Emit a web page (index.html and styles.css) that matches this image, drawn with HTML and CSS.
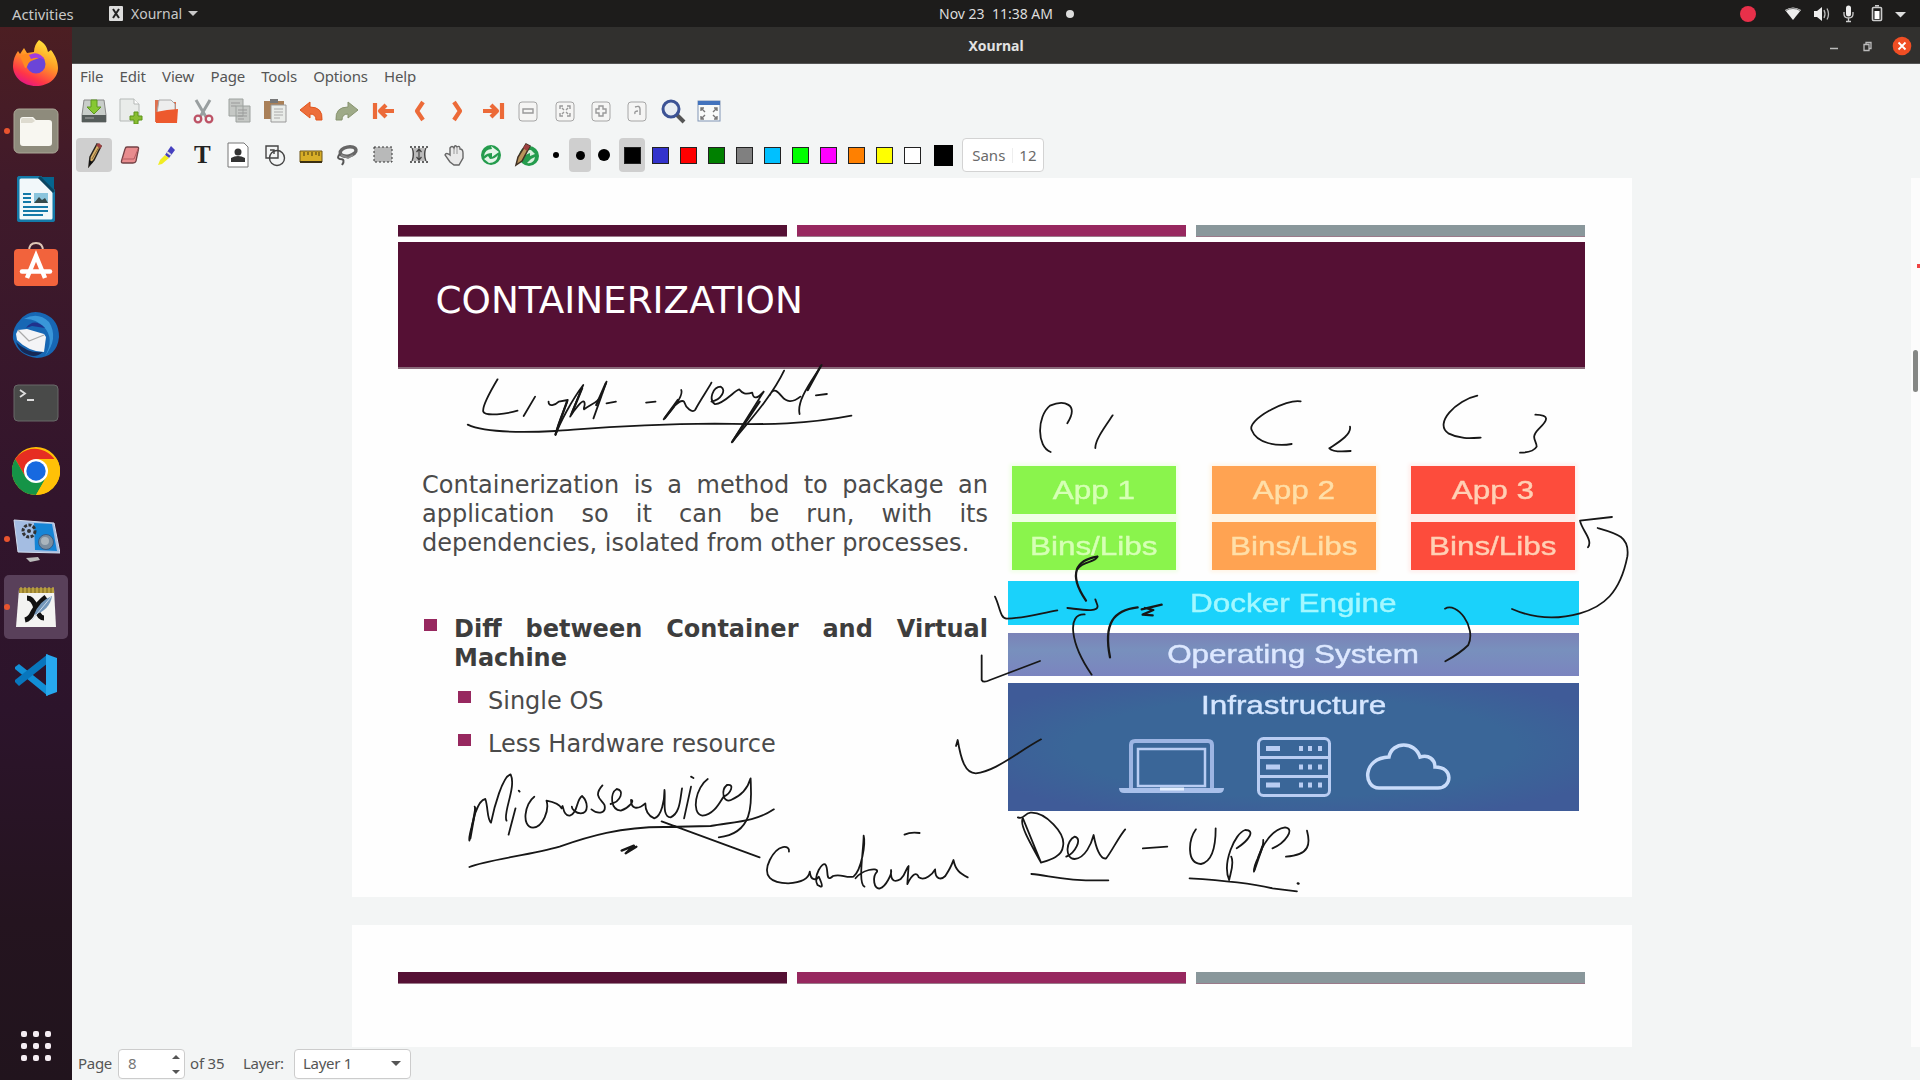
FILE: index.html
```html
<!DOCTYPE html>
<html lang="en">
<head>
<meta charset="utf-8">
<title>Xournal</title>
<link rel="stylesheet" href="styles.css">
</head>
<body>
<header class="topbar">
  <span class="activities">Activities</span>
  <span class="appmenu"><svg width="14" height="15" viewBox="0 0 14 15"><rect width="14" height="15" rx="1" fill="#ddd"/><path d="M4 3l6 9M10 3l-6 9" stroke="#222" stroke-width="2"/></svg>Xournal<i class="caret"></i></span>
  <span class="clock">Nov 23&nbsp; 11:38 AM<i class="notice"></i></span>
  <svg class="tray" width="170" height="26" viewBox="0 0 170 26">
    <circle cx="8" cy="13" r="8" fill="#e8304a"/>
    <path d="M45 9q8-5 16 0l-8 10z" fill="#eee"/><path d="M46 9.500q7-4 14 0" stroke="#777" fill="none"/>
    <path d="M74 10h3l5-4v14l-5-4h-3z" fill="#eee"/><path d="M84 9q2 4 0 8M87 7.500q3 5.500 0 11" stroke="#bbb" stroke-width="1.300" fill="none"/>
    <rect x="106" y="4.500" width="5" height="11" rx="2.500" fill="#eee"/><path d="M104 11v2q0 4 4.500 4t4.500-4v-2M108.500 17v3M106 20.500h5" stroke="#ccc" stroke-width="1.300" fill="none"/>
    <rect x="132.500" y="6.500" width="9" height="13" rx="1" fill="none" stroke="#ccc" stroke-width="1.600"/><path d="M135 4.800h4" stroke="#ccc" stroke-width="1.600"/><rect x="134.500" y="10" width="5" height="8" fill="#fff"/>
    <path d="M155 11h11l-5.500 5.500z" fill="#ddd"/>
  </svg>
</header>
<div class="desktop">
<nav class="dock">
  <div class="app"><svg width="48" height="48" viewBox="0 0 48 48"><defs><linearGradient id="ff" x1=".8" y1="0" x2=".3" y2="1"><stop offset="0" stop-color="#fff03e"/><stop offset=".45" stop-color="#ff9a26"/><stop offset=".8" stop-color="#ff3647"/><stop offset="1" stop-color="#e31587"/></linearGradient></defs><path d="M27 1c7 4 8 8 9 12l3-2c5 6 7 13 7 18 0 10-9 18-22 18S1 38 1 27c0-6 2-11 5-15l2 3 4-6 3 5 7-1c0-5 2-9 5-12z" fill="url(#ff)"/><circle cx="24" cy="25" r="9.500" fill="#6b45d8"/><path d="M8 17l8-3 11 5-8 3c-4 2-3 7-6 7z" fill="#ff8a20"/><path d="M17 16q10-5 16 5-7-4-14-1z" fill="#a13be0"/></svg></div>
  <div class="app run"><svg width="46" height="46" viewBox="0 0 46 46"><rect x="1" y="1" width="44" height="44" rx="5" fill="#8e8b7c" stroke="#aaa696"/><path d="M7 12q0-3 3-3h10l3 3h13q3 0 3 3v20q0 3-3 3H10q-3 0-3-3z" fill="#f8f7f1"/><path d="M8 15V12q0-2 2-2h9l3 3-3 2z" fill="#dedbcf"/></svg></div>
  <div class="app"><svg width="38" height="46" viewBox="0 0 38 46"><path d="M4 1h19l14 14v27q0 3-3 3H4q-3 0-3-3V4q0-3 3-3z" fill="#f2f8fa" stroke="#1479a8" stroke-width="3"/><path d="M22 1l15 15V1z" fill="#06658f"/><path d="M22 1l15 15" stroke="#0c4560" stroke-width="3"/><path d="M6 18h8M6 22h8M6 26h8M6 31h25M6 35h25M6 39h20" stroke="#1479a8" stroke-width="2"/><rect x="17" y="17" width="14" height="10" fill="#8ac5dd"/><path d="M17 27l5-6 3 3 3-2 3 5z" fill="#354a4b"/></svg></div>
  <div class="app store"><svg width="46" height="46" viewBox="0 0 46 46"><path d="M16 9q0-8 7-8t7 8" fill="none" stroke="#dfc6b6" stroke-width="2"/><rect x="1" y="7" width="44" height="37" rx="4" fill="#f2633c"/><path d="M14 36l9-22 9 22" fill="none" stroke="#fff" stroke-width="4.500"/><path d="M9 29.500h28" stroke="#fff" stroke-width="4.500" stroke-linecap="round"/></svg></div>
  <div class="app"><svg width="48" height="48" viewBox="0 0 48 48"><path d="M8 9Q18-3 33 3q14 6 14 23-2 20-22 21Q6 45 1 28 0 17 8 9z" fill="#1767b4"/><path d="M12 8Q26 0 37 11q10 16-4 34 10-17-1-29-9-9-20-8z" fill="#3996d9"/><path d="M14 17q8-11 19 0l-13-2z" fill="#20318c"/><path d="M4 23l2-4 9-1 17 5 2 3-2 15q-15 0-27-12z" fill="#f4f4f6"/><path d="M6 19l11 11 15-6" fill="none" stroke="#aaa" stroke-width="1.300"/><path d="M4 31q12 12 27 10-7 6-14 3Q8 42 4 31z" fill="#162855"/></svg></div>
  <div class="app"><svg width="46" height="38" viewBox="0 0 46 38"><rect x="1" y="1" width="44" height="36" rx="4" fill="#494a49" stroke="#686868"/><path d="M7 6l5 3.500-5 3.500M14 16h7" stroke="#ddd" stroke-width="1.800" fill="none"/></svg></div>
  <div class="app"><svg width="48" height="48" viewBox="0 0 48 48"><circle cx="24" cy="24" r="24" fill="#ffc107"/><path d="M24 24H46.700A24 24 0 0 0 3.200 12L13.600 30z" fill="#e62d22"/><path d="M3.200 12A24 24 0 0 0 24 48L34.400 30 13.600 30z" fill="#159447"/><path d="M24 12h20.800A24 24 0 0 1 24 48l10.400-18z" fill="#ffc107"/><circle cx="24" cy="24" r="12" fill="#fff"/><circle cx="24" cy="24" r="9.700" fill="#1769e0"/></svg></div>
  <div class="app run"><svg width="48" height="48" viewBox="0 0 48 48"><path d="M2 5l40 3 6 30-42-1z" fill="#a4bde2" stroke="#d1dced"/><path d="M22 8l18 1 5 27-22-1z" fill="#1685d6"/><circle cx="17" cy="16" r="6" fill="none" stroke="#333" stroke-width="3" stroke-dasharray="3 1.500"/><circle cx="17" cy="16" r="2" fill="#333"/><circle cx="34" cy="27" r="7.500" fill="#7b8d9e" stroke="#375c88"/><circle cx="33" cy="26" r="4" fill="#aab5bd"/><path d="M14 43l12-1 2 3-10 2z" fill="#bbb"/></svg></div>
  <div class="app run active"><svg width="42" height="44" viewBox="0 0 42 44"><path d="M4 4h35l2 38H1z" fill="#f3f3f1"/><path d="M4 3h35v5H4z" fill="#99812f"/><path d="M6 2v6M10 2v6M14 2v6M18 2v6M22 2v6M26 2v6M30 2v6M34 2v6M38 2v6" stroke="#d9bd54"/><path d="M12 13q6 0 9 10 3 10 8 10M31 12q-8 6-13 15-3 7-8 8" stroke="#111" stroke-width="5" fill="none"/><path d="M37 11q-2 14-18 19 5-14 18-19z" fill="#7397ba"/><path d="M36 12L17 35" stroke="#c9d9e8"/></svg></div>
  <div class="app"><svg width="44" height="44" viewBox="0 0 44 44"><path d="M1 14l4-3 29 23v9L1 16z" fill="#128fd6"/><path d="M1 29l4 4L34 10V1L1 27z" fill="#0876bd"/><path d="M32 1l11 4v34l-11 4z" fill="#27a8ee"/></svg></div>
  <svg class="grid" width="32" height="32" viewBox="0 0 32 32" fill="#f5edf3"><rect x="1" y="1" width="6" height="6" rx="2"/><rect x="13" y="1" width="6" height="6" rx="2"/><rect x="25" y="1" width="6" height="6" rx="2"/><rect x="1" y="13" width="6" height="6" rx="2"/><rect x="13" y="13" width="6" height="6" rx="2"/><rect x="25" y="13" width="6" height="6" rx="2"/><rect x="1" y="25" width="6" height="6" rx="2"/><rect x="13" y="25" width="6" height="6" rx="2"/><rect x="25" y="25" width="6" height="6" rx="2"/></svg>
</nav>
<main class="window">
  <div class="titlebar"><span>Xournal</span>
    <svg class="controls" width="90" height="24" viewBox="0 0 90 24"><path d="M5 14.500h8" stroke="#bbb" stroke-width="1.500"/><path d="M39 10.500h5v6h-5zM41 10V8.500h5v6h-1.500" fill="none" stroke="#bbb" stroke-width="1.300"/><circle cx="77" cy="12" r="9.300" fill="#f04e24"/><path d="M73.500 8.500l7 7M80.500 8.500l-7 7" stroke="#fff" stroke-width="1.800"/></svg>
  </div>
  <div class="menubar"><span>File</span><span>Edit</span><span>View</span><span>Page</span><span>Tools</span><span>Options</span><span>Help</span></div>
  <div class="tools">
    <b><svg viewBox="0 0 26 26"><path d="M3 2h20l2 15v7H1v-7z" fill="#c9ceca" stroke="#888"/><path d="M1 17h24v7H1z" fill="#555c5a"/><path d="M4 20h9" stroke="#aaa"/><path d="M10 2h6v7h4l-7 7-7-7h4z" fill="#86c832" stroke="#5c981e"/></svg></b>
    <b><svg viewBox="0 0 26 26"><path d="M3 1h14l5 5v17H3z" fill="#e9ecea" stroke="#b5b9b7"/><path d="M17 1v5h5" fill="#fff" stroke="#b5b9b7"/><path d="M17 14h4v4h4v4h-4v4h-4v-4h-4v-4h4z" fill="#89bd31" stroke="#5d9518"/></svg></b>
    <b><svg viewBox="0 0 26 26"><path d="M2 2h7l2 2h12v20H2z" fill="#dd7150"/><path d="M6 2h12l4 4v9H4z" fill="#eee" stroke="#aaa"/><path d="M3 14l11-2 11-1-1 14H3z" fill="#ed592d"/></svg></b>
    <b><svg viewBox="0 0 26 26" fill="none"><path d="M6 2l10 17M20 2L10 19" stroke="#999fa0" stroke-width="3"/><circle cx="8" cy="21" r="3.300" stroke="#bd5366" stroke-width="2.300"/><circle cx="19" cy="21" r="3.300" stroke="#bd5366" stroke-width="2.300"/></svg></b>
    <b><svg viewBox="0 0 26 26"><path d="M3 1h14v17H3zM10 8h14v16H10z" fill="#c5c8c5" stroke="#9da29f"/><path d="M5 5h9M5 8h5M12 12h9M12 15h9M12 18h9M12 21h6" stroke="#999"/></svg></b>
    <b><svg viewBox="0 0 26 26"><path d="M2 3h20v18H2z" fill="#a98058"/><path d="M8 1h8v4H8z" fill="#777"/><path d="M9 7h15v17H9z" fill="#e9ece9" stroke="#999"/><path d="M12 11h9M12 14h9M12 17h9M12 20h6" stroke="#aaa"/></svg></b>
    <b><svg viewBox="0 0 26 26"><path d="M2 12l10-8v5q13 0 12 13h-6q0-6-6-6v4z" fill="#ed6e3b" stroke="#e1551c"/></svg></b>
    <b><svg viewBox="0 0 26 26"><path d="M24 12L14 4v5Q1 9 2 22h6q0-6 6-6v4z" fill="#9eaa88" stroke="#87936f"/></svg></b>
    <b><svg viewBox="0 0 26 26" class="nav"><path d="M4 5v16M23 13H9M15 7l-6 6 6 6"/></svg></b>
    <b><svg viewBox="0 0 26 26" class="nav"><path d="M16 4l-6 9 6 9"/></svg></b>
    <b><svg viewBox="0 0 26 26" class="nav"><path d="M11 4l6 9-6 9"/></svg></b>
    <b><svg viewBox="0 0 26 26" class="nav"><path d="M23 5v16M4 13h14M12 7l6 6-6 6"/></svg></b>
    <b><svg viewBox="0 0 26 26" class="zoom"><rect x="4" y="4" width="18" height="19" rx="3"/><path d="M8 11h10v4H8z"/></svg></b>
    <b><svg viewBox="0 0 26 26" class="zoom"><rect x="4" y="4" width="18" height="19" rx="3"/><path d="M8 11V8h3M15 8h3v3M18 15v3h-3M11 18H8v-3M10 10l2 2M16 10l-2 2M10 16l2-2M16 16l-2-2"/></svg></b>
    <b><svg viewBox="0 0 26 26" class="zoom"><rect x="4" y="4" width="18" height="19" rx="3"/><path d="M11 8h4v3h3v4h-3v3h-4v-3H8v-4h3z"/></svg></b>
    <b><svg viewBox="0 0 26 26" class="zoom"><rect x="4" y="4" width="18" height="19" rx="3"/><path d="M11 9q5-2 5 2v6M14 13q-4 0-3 3"/></svg></b>
    <b><svg viewBox="0 0 26 26"><path d="M17 17l7 7" stroke="#555" stroke-width="4"/><circle cx="11" cy="11" r="8" fill="#e8edf3" stroke="#3c5395" stroke-width="3"/></svg></b>
    <b><svg viewBox="0 0 26 26"><rect x="2" y="3" width="22" height="20" fill="#f8faf9" stroke="#8196b6"/><path d="M2 3h22v4H2z" fill="#4273bd"/><path d="M5 13v-3h3M5 10l4 4M21 13v-3h-3M21 10l-4 4M5 18v3h3M5 21l4-4M21 18v3h-3M21 21l-4-4" fill="none" stroke="#777" stroke-width="1.400"/></svg></b>
  </div>
  <div class="tools second">
    <b class="on"><svg viewBox="0 0 26 26"><path d="M8 24l1-9L16 2l4 2-7 14z" fill="#d8b168" stroke="#28241f" stroke-width="1.500"/><path d="M15 3l3-2 3 3-2 3z" fill="#9d4141"/><path d="M8 24l0-6 4 2z" fill="#111"/><path d="M11 17l7-12" stroke="#886a39"/></svg></b>
    <b><svg viewBox="0 0 26 26"><path d="M10 5h10q2 0 1.500 2L19 19q-.5 2-3 2H6q-2 0-1.500-2L8 7q.5-2 2-2z" fill="#e88c8e" stroke="#734245" stroke-width="1.300"/><path d="M5 17h12l4-10" fill="none" stroke="#b55a60"/></svg></b>
    <b><svg viewBox="0 0 26 26"><path d="M18 4l4 4-6 8-4-3z" fill="#4540c0"/><path d="M12 13l4 3-7 6-4 1 2-5z" fill="#f0ec22"/><path d="M14 10l4 3" stroke="#ddd" stroke-width="2"/></svg></b>
    <b class="letter">T</b>
    <b><svg viewBox="0 0 26 26"><path d="M3 1h16l4 4v20H3z" fill="#fff" stroke="#777"/><circle cx="13" cy="10" r="3.500" fill="#333"/><path d="M6 20v-4q7-4 14 0v4z" fill="#333"/></svg></b>
    <b><svg viewBox="0 0 26 26" fill="none" stroke="#444" stroke-width="1.400"><path d="M4 4h12v12H4zM8 8h4v4"/><circle cx="15" cy="16" r="7.500"/></svg></b>
    <b><svg viewBox="0 0 26 26"><path d="M2 9h22v11H2z" fill="#d8ae28" stroke="#6f5618"/><path d="M2 20h22" stroke="#3b2f12" stroke-width="2"/><path d="M6 10v4M10 10v3M14 10v4M18 10v3M21 10v4" stroke="#473611"/></svg></b>
    <b><svg viewBox="0 0 26 26" fill="none"><ellipse cx="14" cy="9.500" rx="8" ry="4.500" transform="rotate(-12 14 9)" stroke="#666" stroke-width="3.500"/><path d="M6 12q-4 4 0 5 6 0 2 6" stroke="#555" stroke-width="2"/><path d="M7 13l7 3 5-3" stroke="#888" stroke-width="2"/></svg></b>
    <b><svg viewBox="0 0 26 26"><rect x="4" y="5" width="18" height="15" fill="#b8b9b9" stroke="#333" stroke-dasharray="2 2"/></svg></b>
    <b><svg viewBox="0 0 26 26"><rect x="6" y="6" width="14" height="13" fill="#bbb"/><path d="M4 5h18M4 20h18" stroke="#333" stroke-width="1.300" stroke-dasharray="2 2"/><path d="M13 7v11M10.500 10l2.500-3 2.500 3M10.500 15l2.500 3 2.500-3M6 6q3 6 0 13M20 6q-3 6 0 13" fill="none" stroke="#444" stroke-width="1.200"/></svg></b>
    <b><svg viewBox="0 0 26 26"><path d="M8 20l-5-7q1-3 5 0V6q2-3 4 0 1-4 3-1 3-2 3 2 3 0 3 4v5l-4 7h-5z" fill="#e9e9e9" stroke="#666" stroke-width="1.400"/><path d="M12 6v6M15 6v6" stroke="#999"/></svg></b>
    <b><svg viewBox="0 0 26 26"><circle cx="13" cy="13" r="10" fill="#249c4d"/><path d="M6 14q1-7 8-7l-1-3 8 6-7 5v-4q-5 0-8 3zM20 13q-1 8-9 8l-5-4 4-3 2 3q5 0 8-4z" fill="#e5f5e9"/></svg></b>
    <b><svg viewBox="0 0 26 26"><circle cx="15" cy="14" r="10" fill="#249c4d"/><path d="M9 14q2-7 8-6l4 4-5 2v-3M21 15q-1 7-8 6l4-4z" fill="#d9efdd"/><path d="M2 23l2-8 8-13 4 2-8 15z" fill="#b9955b" stroke="#3f3023" stroke-width="1.500"/><path d="M12 2l4 2-3 5-4-3z" fill="#9d4141"/></svg></b>
    <i class="dot"><u class="d1"></u></i><i class="dot on"><u class="d2"></u></i><i class="dot"><u class="d3"></u></i>
    <div class="palette"><i class="on"><u class="black"></u></i><i><u class="blue"></u></i><i><u class="red"></u></i><i><u class="dkgreen"></u></i><i><u class="gray"></u></i><i><u class="sky"></u></i><i><u class="lime"></u></i><i><u class="magenta"></u></i><i><u class="orange"></u></i><i><u class="yellow"></u></i><i><u class="white"></u></i></div>
    <span class="current"></span>
    <span class="font"><span>Sans</span><span class="size">12</span></span>
  </div>
  <div class="canvas">
    <section class="page">
      <div class="stripes"><i></i><i></i><i></i></div>
      <h1>CONTAINERIZATION</h1>
      <div class="content">
        <div class="copy">
          <p>Containerization is a method to package an application so it can be run, with its dependencies, isolated from other processes.</p>
          <h2>Diff between Container and Virtual Machine</h2>
          <ul><li>Single OS</li><li>Less Hardware resource</li></ul>
        </div>
        <div class="stack">
          <div class="apps">
            <div class="col green"><div><span>App 1</span></div><div><span>Bins/Libs</span></div></div>
            <div class="col amber"><div><span>App 2</span></div><div><span>Bins/Libs</span></div></div>
            <div class="col tomato"><div><span>App 3</span></div><div><span>Bins/Libs</span></div></div>
          </div>
          <div class="engine"><span>Docker Engine</span></div>
          <div class="os"><span>Operating System</span></div>
          <div class="infra"><span>Infrastructure</span>
            <svg width="340" height="64" viewBox="1115 733 340 64" fill="none" stroke="#b9cdf3" stroke-width="3">
              <path d="M1131 787v-44q0-4 4-4h73q4 0 4 4v44" stroke="#9db5e3" stroke-width="4"/><path d="M1138 784v-37h67v37z" stroke-width="2.500"/><path d="M1119 786h105q0 5-5 5h-95q-5 0-5-5z" fill="#a9c0ea" stroke="none"/><path d="M1160 787h24" stroke="#e5f0ff"/>
              <rect x="1258.500" y="736.500" width="71" height="57" rx="5"/><path d="M1259 755.500h70M1259 774.500h70"/><path d="M1266 746.500h14M1266 765h14M1266 783h14M1299 746.500h4M1308 746.500h4M1318 746.500h4M1299 765h4M1308 765h4M1318 765h4M1299 783h4M1308 783h4M1318 783h4" stroke-width="5"/>
              <path d="M1379 786c-16 0-17-30 10-31 3-16 26-16 31 0 9-3 15 3 15 10 19 0 17 21 3 21z" stroke="#c9dcfa" stroke-width="3.500"/>
            </svg>
          </div>
        </div>
      </div>
    </section>
    <section class="page next"><div class="stripes"><i></i><i></i><i></i></div></section>
    <div class="gutter"><i class="mark"></i><i class="scroll"></i></div>
  </div>
  <footer class="status"><span class="lbl">Page</span><span class="spin">8<svg width="12" height="24" viewBox="0 0 12 24" fill="#555"><path d="M2 7l4-4 4 4zM2 18l4 4 4-4z"/></svg></span><span class="of">of 35</span><span class="layer">Layer:</span><span class="combo">Layer 1<i class="caret"></i></span></footer>
</main>
</div>
<svg class="ink" width="1920" height="1080" viewBox="0 0 1920 1080">
  <g transform="translate(380 350) scale(.40816 .33333)">
    <path d="M288 88C270 125 250 170 253 185C258 200 310 192 337 182M380 140L352 198M413 155C412 172 430 165 438 155L460 150C455 170 435 220 430 255C440 220 470 150 498 105L466 200C475 180 495 150 500 155C505 165 497 175 500 178C520 160 535 158 545 130M555 95L523 205M555 160L578 155M652 158L675 155"/>
    <path d="M738 120Q745 140 695 208C715 175 735 145 745 155C750 175 765 190 772 180C785 150 805 115 812 98M812 155C835 150 850 120 835 110C815 110 805 150 820 162C840 165 870 120 880 118C888 130 895 135 912 128C915 150 925 145 940 125M990 62C960 140 900 220 862 277L940 125M955 135C965 110 975 125 985 140C995 155 1010 160 1030 140M1082 45C1060 90 1020 150 1028 192M1068 136L1095 132"/>
    <path class="bold" d="M458 155L430 253M495 115L470 190M553 100L530 165M930 155L864 274M1080 48L1048 120M730 150L698 204"/>
    <path d="M215 224C260 250 350 248 430 243C520 235 620 222 820 221C950 225 1050 222 1155 197"/>
  </g>
  <g transform="translate(380 600) scale(.40816 .33333)">
    <path d="M232 620C240 640 215 700 219 722C225 660 240 600 258 597C265 620 262 660 272 668C280 620 300 530 320 523C335 560 300 640 310 662M332 625L315 704M340 572l2 3M378 590C355 610 345 680 375 683C400 680 415 630 408 602C425 606 440 612 445 625C450 600 445 650 465 647C485 640 480 600 495 588C510 605 512 640 492 640C480 640 470 628 470 620M545 556C520 590 545 600 550 615C555 640 535 645 518 628"/>
    <path d="M565 612C590 605 600 570 580 567C562 580 565 630 590 632C610 625 625 600 615 600C615 625 630 632 650 610C650 620 650 645 672 655C690 650 697 600 697 570C700 600 690 650 712 652C735 640 735 600 740 565M762 560L745 655M762 530l6 4M803 537C775 560 760 640 790 647C820 645 835 600 842 590C860 580 870 550 850 555C835 570 840 610 860 600C880 590 900 570 908 535C910 600 920 700 830 712"/>
    <path d="M219 801C260 780 370 765 440 740C510 710 590 680 700 681L810 678C870 665 920 665 965 628M690 664L930 772"/>
    <path class="bold" d="M592 752L622 737L602 760L628 740M234 625L221 715"/>
    <path d="M1002 755C1005 735 975 730 955 780C935 830 960 850 1000 850C1030 848 1050 840 1053 815C1055 845 1070 840 1075 830C1090 870 1080 860 1072 855C1060 830 1085 780 1092 795C1100 810 1090 850 1110 828C1130 820 1140 835 1160 830C1180 810 1190 730 1185 707C1185 750 1170 850 1187 860M1165 835C1180 810 1220 800 1218 815C1205 830 1210 870 1225 865C1240 860 1255 820 1252 810C1250 850 1265 845 1275 838C1290 820 1290 800 1295 798L1292 852C1305 820 1315 815 1320 832C1335 845 1355 820 1360 808C1360 840 1375 840 1385 828C1400 800 1402 790 1405 780C1410 810 1420 820 1440 832M1285 704Q1300 695 1322 699"/>
  </g>
  <g transform="translate(980 380) scale(.33333)">
    <path d="M212 216C170 200 170 110 210 77C250 60 300 70 262 130M398 106C375 140 345 180 346 204M962 64C920 55 800 120 815 150C830 190 890 200 935 192M352 530C345 550 310 540 292 568M262 684C300 688 360 700 352 675L346 658M45 650C60 680 60 715 80 716C130 715 180 700 232 691M314 703C260 700 270 790 335 884M5 826L5 900Q10 910 30 900L180 843"/>
    <path class="bold" d="M352 530C290 540 262 580 318 662M473 682C400 690 370 730 390 832M485 688L545 674M495 684L520 690L488 704L518 706"/>
  </g>
  <g transform="translate(1300 380) scale(.33333)">
    <path d="M150 140C155 165 110 190 88 205Q100 218 152 213M532 47C470 60 400 130 445 160C480 178 510 175 542 173M706 104C750 105 745 120 715 148C690 175 710 180 710 200Q700 218 660 218M936 411L840 422C845 450 880 480 864 502M893 444C950 460 990 470 982 530C960 640 910 680 840 700C770 720 700 715 636 687M435 686C470 665 530 740 505 795Q480 820 436 844"/>
  </g>
  <g transform="translate(940 660) scale(.42088 .33333)">
    <path d="M38 258L42 240C50 300 60 340 85 340C130 335 180 280 240 238M185 472C200 480 200 460 215 458C250 455 300 520 292 560C290 590 260 600 240 608C210 540 188 490 197 475L240 608M300 590C320 580 340 535 320 530C300 540 295 595 320 597C345 595 360 550 365 525C370 560 380 600 395 595C410 570 425 530 440 508M482 565L540 560M608 508C590 540 585 610 620 612C650 605 655 550 655 505M692 590C700 610 690 640 687 660C670 610 700 520 725 510C750 510 735 540 705 565M768 540C770 580 745 600 746 635C755 580 780 510 820 502C845 505 820 550 790 565M872 512C880 550 880 585 822 590M217 642C260 645 290 665 400 661M593 655C660 660 740 670 790 685L848 694"/>
    <path class="bold" d="M850 670l2 1M766 560L747 630"/>
  </g>
</svg>
</body>
</html>
```
FILE: styles.css
```css
* { box-sizing: border-box; }
body { margin: 0; width: 1920px; height: 1080px; overflow: hidden; position: relative; background: #f3f5f5; font: 15px/1 "Noto Sans", sans-serif; color: #555; }
i, u { font-style: normal; text-decoration: none; display: block; }
svg { display: block; flex: none; }

.topbar { height: 27px; background: #1d1c1b; color: #c9c9c9; display: grid; grid-template-columns: 109px 830px auto 1fr; align-items: center; font-size: 14px; line-height: 26px; }
.activities { padding-left: 12px; font-size: 14.8px; }
.appmenu { display: flex; align-items: center; gap: 8px; }
.caret { border: 5px solid transparent; border-top-color: currentColor; border-bottom: 0; }
.appmenu .caret { margin-left: -2px; }
.clock { display: flex; align-items: center; gap: 13px; color: #ddd; }
.notice { width: 8px; height: 8px; border-radius: 50%; background: #ddd; }
.tray { width: 170px; justify-self: end; margin-right: 10px; }

.desktop { display: flex; height: 1053px; }
.dock { width: 72px; flex: none; display: flex; flex-direction: column; align-items: center; padding-top: 2px; background: linear-gradient(#4c1e22, #401a2a 15%, #32152c 45%, #2c142b 65%, #24141f 85%, #21141d); }
.app { width: 72px; height: 68px; display: flex; align-items: center; justify-content: center; position: relative; }
.store { padding-bottom: 5px; }
.run::before { content: ""; position: absolute; left: 4px; top: 31px; width: 6px; height: 6px; border-radius: 50%; background: #e9542f; }
.active { width: 64px; height: 64px; margin: 2px 0; background: #59405a; border-radius: 5px; }
.active::before { left: 0; top: 29px; }
.grid { margin-top: auto; margin-bottom: 18px; }

.window { flex: 1; min-width: 0; display: flex; flex-direction: column; }
.titlebar { height: 37px; padding-top: 1px; background: #31302e; color: #e2e2e2; font-weight: 700; font-size: 14px; display: grid; grid-template-columns: 1fr auto 1fr; align-items: center; border-bottom: 1px solid #555; }
.titlebar > span { grid-column: 2; }
.controls { justify-self: end; margin-right: 5px; }
.menubar { height: 25px; padding-left: 8px; display: flex; gap: 16.2px; align-items: center; letter-spacing: -.15px; }
.tools { height: 44px; display: flex; align-items: center; padding-left: 4px; }
.tools b { width: 36.2px; height: 34px; display: grid; place-items: center; flex: none; }
.tools svg { width: 26px; height: 26px; }
.second { height: 45px; padding-bottom: 1px; }
.second b { width: 36.1px; }
.on { background: #cfcfcf; border-radius: 4px; }
.letter { font: 700 25px "Liberation Serif", serif; color: #222; }
.nav { fill: none; stroke: #ec6a38; stroke-width: 4.2; stroke-linejoin: round; stroke-linecap: butt; }
.zoom { fill: #f5f5f4; stroke: #a6a6a6; }
.zoom path { fill: none; stroke: #999; stroke-width: 1.4; }
.dot { width: 22px; height: 34px; margin-right: 2px; display: grid; place-items: center; }
.dot u { background: #000; border-radius: 50%; }
.d1 { width: 6px; height: 6px; }
.d2 { width: 9px; height: 9px; }
.d3 { width: 12px; height: 12px; }
.palette { display: flex; margin-left: 2px; }
.palette i { width: 26px; height: 34px; margin-right: 2px; display: grid; place-items: center; }
.palette u { width: 17px; height: 17px; border: 1px solid #222; }
.black { background: #000; }
.blue { background: #3333cc; }
.red { background: #f00; }
.dkgreen { background: #008000; }
.gray { background: #808080; }
.sky { background: #00c0ff; }
.lime { background: #0f0; }
.magenta { background: #f0f; }
.orange { background: #ff8000; }
.yellow { background: #ff0; }
.white { background: #fff; }
.current { width: 19px; height: 21px; background: #000; margin: 0 9px 0 7px; }
.font { width: 82px; height: 34px; background: #fff; border: 1px solid #d3d3d3; border-radius: 4px; display: flex; align-items: center; padding-left: 9px; color: #6a6a6a; }
.size { border-left: 1px solid #eee; margin-left: 7px; padding-left: 6px; }

.canvas { height: 869px; position: relative; overflow: hidden; padding-left: 279.5px; background: #f3f5f5; }
.page { width: 1280px; height: 719px; background: #fefefe; padding: 47px 47px 0 46px; }
.next { margin-top: 28px; }
.stripes { display: grid; grid-template-columns: repeat(3, 389px); justify-content: space-between; }
.stripes i { height: 12px; background: #551034; border-bottom: 1px solid #9a7a8a; }
.stripes i:nth-child(2) { background: #97285f; }
.stripes i:nth-child(3) { background: #89979b; }
h1 { margin: 5px 0 0; height: 127px; background: #551034; color: #fff; font: 37.3px/116px "DejaVu Sans", sans-serif; padding-left: 38px; border-bottom: 2px solid #8a6a7a; }
.content { display: flex; font-family: "DejaVu Sans", sans-serif; color: #4a4a4a; }
.copy { width: 566px; margin: 102px 20px 0 24.5px; font-size: 24px; line-height: 29px; }
p, h2, ul { margin: 0; padding: 0; font-size: inherit; text-align: justify; }
h2 { margin-top: 57px; padding-left: 32px; position: relative; color: #3d3d3d; }
ul { list-style: none; padding-left: 66px; }
li { margin-top: 14px; position: relative; }
h2::before, li::before { content: ""; position: absolute; width: 13px; height: 12px; left: 2px; top: 4px; background: #97285f; }
li::before { left: -30px; }
.stack { width: 571px; margin-top: 97px; font: 26px/1 "Liberation Sans", sans-serif; color: #eef8ff; text-align: center; }
.stack span { display: inline-block; transform: scaleX(1.21); filter: blur(.6px); -webkit-text-stroke: .4px; }
.apps { display: flex; justify-content: space-between; padding: 0 4px; height: 115px; }
.col { width: 164px; height: 104px; }
.col div { height: 48px; margin-bottom: 8px; line-height: 49px; }
.green { background: #efffe4; color: #d6ffb5; box-shadow: 0 0 4px 2px #efffe4; }
.green div { background: #8af44c; }
.amber { background: #fff4e4; color: #ffdfa8; box-shadow: 0 0 4px 2px #fff4e4; }
.amber div { background: #ffa352; }
.tomato { background: #ffecea; color: #ffd0b5; box-shadow: 0 0 4px 2px #ffecea; }
.tomato div { background: #fd4c3c; }
.engine { height: 44px; line-height: 45px; background: #1ad2fb; color: #a4f8ff; }
.os { height: 43px; line-height: 43px; margin: 8px 0 7px; background: linear-gradient(#7b82b7, #7890bd 40%, #7b84bf); color: #dde8ff; }
.infra { height: 128px; padding-top: 9px; background: radial-gradient(ellipse, #3a6698 55%, #3f5b98 85%); color: #d5e6ff; }
.infra svg { margin: 17px 0 0 107px; filter: blur(.5px); }
.gutter { position: absolute; right: 0; top: 0; bottom: 0; width: 9px; background: #fcfcfc; }
.mark { width: 3px; height: 4px; margin: 86px 0 0 6px; background: #f04444; }
.scroll { width: 5px; height: 42px; margin: 82px 0 0 2px; border-radius: 3px; background: #858785; }

.status { flex: 1; display: flex; align-items: center; padding-left: 6px; }
.lbl { width: 40px; letter-spacing: -.3px; }
.spin { width: 67px; height: 30px; background: #fff; border: 1px solid #ccc; border-radius: 4px; display: flex; align-items: center; justify-content: space-between; padding: 0 2px 0 9px; color: #777; }
.of { margin-left: 5px; width: 53px; letter-spacing: -.2px; }
.layer { width: 51px; letter-spacing: -.3px; }
.combo { width: 117px; height: 30px; background: #fff; border: 1px solid #ccc; border-radius: 4px; display: flex; align-items: center; justify-content: space-between; padding: 0 9px 0 8px; letter-spacing: -.3px; }

.ink { position: absolute; left: 0; top: 0; fill: none; stroke: #171717; stroke-linecap: round; stroke-linejoin: round; }
.ink path { stroke-width: 1.8px; vector-effect: non-scaling-stroke; }
.ink .bold { stroke-width: 2.3px; }
```
